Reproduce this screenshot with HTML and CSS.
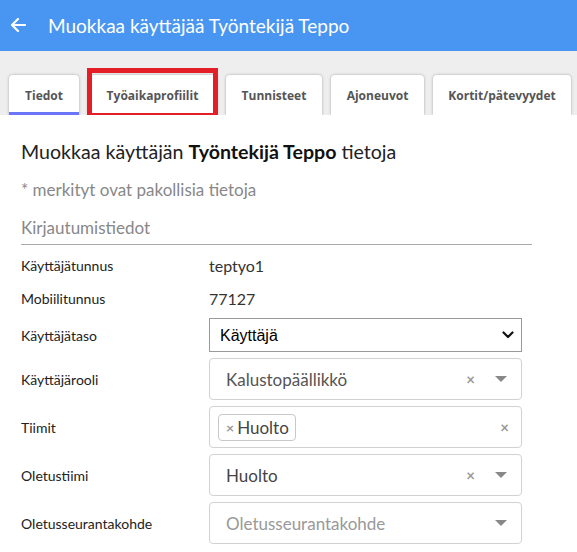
FILE: index.html
```html
<!DOCTYPE html>
<html lang="fi">
<head>
  <meta charset="UTF-8" />
  <title>Muokkaa käyttäjää</title>
  <link rel="stylesheet" href="styles.css">
</head>
<body>
<div class="page">
  <div class="header">
    <svg class="back-icon" width="16" height="16" viewBox="0 0 16 16">
      <path d="M15 8H2M8 2L2 8l6 6" fill="none" stroke="#fff" stroke-width="2.2" stroke-linecap="round" stroke-linejoin="round"/>
    </svg>
    <div class="header-title">Muokkaa käyttäjää Työntekijä Teppo</div>
  </div>

  <div class="tab-bar">
    <div class="tab active">Tiedot</div>
    <div class="tab marked">Työaikaprofiilit<span class="mark-box"></span></div>
    <div class="tab">Tunnisteet</div>
    <div class="tab">Ajoneuvot</div>
    <div class="tab">Kortit/pätevyydet</div>
  </div>

  <div class="content">
    <h2>Muokkaa käyttäjän <b>Työntekijä Teppo</b> tietoja</h2>
    <p class="hint">* merkityt ovat pakollisia tietoja</p>
    <h3 class="section-title">Kirjautumistiedot</h3>

    <div class="form-grid">
      <div class="label">Käyttäjätunnus</div>
      <div class="value">teptyo1</div>

      <div class="label">Mobiilitunnus</div>
      <div class="value">77127</div>

      <div class="label">Käyttäjätaso</div>
      <div class="native-select">
        <select>
          <option>Käyttäjä</option>
        </select>
        <svg class="chevron" width="12" height="8" viewBox="0 0 12 8">
          <path d="M1.5 1.5L6 6l4.5-4.5" fill="none" stroke="#111" stroke-width="2.2" stroke-linecap="round" stroke-linejoin="round"/>
        </svg>
      </div>

      <div class="label">Käyttäjärooli</div>
      <div class="select2">
        <span class="s2-text">Kalustopäällikkö</span>
        <span class="s2-clear">×</span>
        <span class="s2-arrow"></span>
      </div>

      <div class="label">Tiimit</div>
      <div class="select2 multi">
        <span class="s2-tag"><span class="tag-x">×</span>Huolto</span>
        <span class="s2-clear end">×</span>
      </div>

      <div class="label">Oletustiimi</div>
      <div class="select2">
        <span class="s2-text dark">Huolto</span>
        <span class="s2-clear">×</span>
        <span class="s2-arrow"></span>
      </div>

      <div class="label">Oletusseurantakohde</div>
      <div class="select2">
        <span class="s2-text placeholder">Oletusseurantakohde</span>
        <span class="s2-arrow"></span>
      </div>
    </div>
  </div>
</div>
</body>
</html>
```

FILE: styles.css
```css
* { box-sizing: border-box; margin: 0; padding: 0; }
body {
  font-family: Lato, 'Noto Sans', sans-serif;
  background: #fff;
  color: #222;
}
.page {
  width: 577px;
}
.header {
  background: #4996f2;
  height: 51px;
  display: flex;
  align-items: center;
  padding-left: 10px;
}
.back-icon {
  margin-right: 22px;
  margin-top: -2px;
}
.header-title {
  color: #fff;
  font-size: 19px;
  margin-top: 0;
}

/* 탭 */
.tab-bar {
  background: #eee;
  height: 64px;
  display: flex;
  align-items: flex-end;
  gap: 9px;
  padding-left: 9px;
  overflow: hidden;
}
.tab {
  position: relative;
  height: 40px;
  background: #fff;
  border-radius: 4px 4px 0 0;
  box-shadow: 0 0 3px rgba(0, 0, 0, 0.3);
  display: flex;
  align-items: center;
  justify-content: center;
  font-family: 'Open Sans', sans-serif;
  font-size: 12px;
  font-weight: bold;
  color: #555;
  flex-shrink: 0;
}
.tab:nth-child(1) { width: 70px; }
.tab:nth-child(2) { width: 129px; }
.tab:nth-child(3) { width: 96px; }
.tab:nth-child(4) { width: 93px; }
.tab:nth-child(5) { width: 138px; }
.tab.active {
  border-bottom: 3px solid #6a75f8;
  padding-top: 3px;
}
.mark-box {
  position: absolute;
  left: -1px;
  right: -1px;
  top: -7px;
  bottom: -3px;
  border: 5px solid #e41e26;
}

/* 본문 */
.content {
  padding: 23px 45px 0 21px;
}
.content h2 {
  font-size: 19.6px;
  font-weight: normal;
  line-height: 28px;
  color: #222;
}
.content h2 b {
  font-weight: bold;
  color: #111;
}
.hint {
  margin-top: 12px;
  font-size: 17px;
  line-height: 24px;
  color: #888;
}
.section-title {
  margin-top: 14px;
  font-size: 17px;
  font-weight: normal;
  line-height: 24px;
  color: #888;
  padding-bottom: 4px;
  border-bottom: 1px solid #aaa;
}

.form-grid {
  display: grid;
  grid-template-columns: 188px 313px;
  row-gap: 6px;
  margin-top: 7px;
  align-items: center;
}
.label {
  font-size: 14px;
  color: #222;
}
.value {
  height: 27px;
  line-height: 27px;
  font-size: 16px;
  color: #333;
}

.native-select {
  position: relative;
  height: 34px;
}
.native-select select {
  appearance: none;
  -webkit-appearance: none;
  width: 100%;
  height: 100%;
  border: 1px solid #9a9a9a;
  border-radius: 0;
  background: #fff;
  font-family: 'Liberation Sans', Arial, sans-serif;
  font-size: 16px;
  color: #000;
  padding-left: 10px;
}
.chevron {
  position: absolute;
  right: 8px;
  top: 13px;
}

.select2 {
  height: 42px;
  border: 1px solid #d2d2d2;
  border-radius: 4px;
  display: flex;
  align-items: center;
  padding: 0 14px 0 16px;
  font-size: 17px;
}
.s2-text {
  flex: 1;
  color: #555;
}
.s2-text.dark { color: #444; }
.s2-text.placeholder { color: #999; }
.s2-clear {
  color: #999;
  font-size: 15px;
  font-weight: bold;
  margin-right: 20px;
}
.s2-clear.end {
  margin-left: auto;
  margin-right: 0;
}
.s2-arrow {
  width: 0;
  height: 0;
  border-left: 6px solid transparent;
  border-right: 6px solid transparent;
  border-top: 6px solid #888;
}
.select2.multi {
  padding-left: 8px;
  padding-right: 12px;
}
.s2-tag {
  height: 27px;
  border: 1px solid #c8c8c8;
  border-radius: 4px;
  display: flex;
  align-items: center;
  padding: 0 6px 0 7px;
  color: #444;
}
.tag-x {
  color: #999;
  font-size: 14px;
  font-weight: bold;
  margin-right: 3px;
}
```
